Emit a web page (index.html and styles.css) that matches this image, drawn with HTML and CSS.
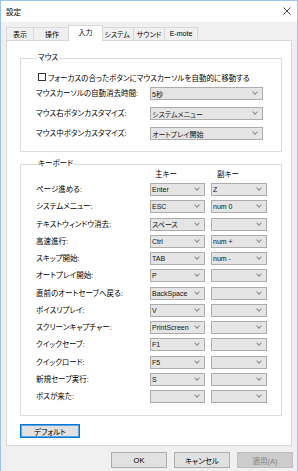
FILE: index.html
```html
<!DOCTYPE html>
<html lang="ja">
<head>
<meta charset="utf-8">
<title>設定</title>
<link rel="stylesheet" href="styles.css">
</head>
<body>
<div class="window">
  <div class="titlebar">
    <span class="title">設定</span>
    <svg class="close" width="8" height="8" viewBox="0 0 8 8"><path d="M0.5 0.5L7.5 7.5M7.5 0.5L0.5 7.5" stroke="#111" stroke-width="0.8" fill="none"/></svg>
  </div>
  <div class="client">
    <div class="tabs">
      <div class="tab t1">表示</div>
      <div class="tab t2">操作</div>
      <div class="tab t3 active">入力</div>
      <div class="tab t4">システム</div>
      <div class="tab t5">サウンド</div>
      <div class="tab t6">E-mote</div>
    </div>
    <div class="panel">
      <fieldset class="group mouse">
        <legend>マウス</legend>
        <label class="check"><span class="box"></span><span>フォーカスの合ったボタンにマウスカーソルを自動的に移動する</span></label>
        <div class="form">
          <span class="lbl">マウスカーソルの自動消去時間:</span>
          <div class="dd"><span class="val">5秒</span></div>
          <span class="lbl">マウス右ボタンカスタマイズ:</span>
          <div class="dd"><span class="val">システムメニュー</span></div>
          <span class="lbl">マウス中ボタンカスタマイズ:</span>
          <div class="dd"><span class="val">オートプレイ開始</span></div>
        </div>
      </fieldset>
      <fieldset class="group keyboard">
        <legend>キーボード</legend>
        <div class="keys-head">
          <span></span><span class="hdr">主キー</span><span class="hdr sub">副キー</span>
        </div>
        <div class="keys">
          <span class="lbl">ページ進める:</span>
          <div class="dd"><span class="val">Enter</span></div>
          <div class="dd"><span class="val">Z</span></div>

          <span class="lbl">システムメニュー:</span>
          <div class="dd"><span class="val">ESC</span></div>
          <div class="dd"><span class="val">num 0</span></div>

          <span class="lbl">テキストウィンドウ消去:</span>
          <div class="dd"><span class="val">スペース</span></div>
          <div class="dd"><span class="val"></span></div>

          <span class="lbl">高速進行:</span>
          <div class="dd"><span class="val">Ctrl</span></div>
          <div class="dd"><span class="val">num +</span></div>

          <span class="lbl">スキップ開始:</span>
          <div class="dd"><span class="val">TAB</span></div>
          <div class="dd"><span class="val">num -</span></div>

          <span class="lbl">オートプレイ開始:</span>
          <div class="dd"><span class="val">P</span></div>
          <div class="dd"><span class="val"></span></div>

          <span class="lbl">直前のオートセーブへ戻る:</span>
          <div class="dd"><span class="val">BackSpace</span></div>
          <div class="dd"><span class="val"></span></div>

          <span class="lbl">ボイスリプレイ:</span>
          <div class="dd"><span class="val">V</span></div>
          <div class="dd"><span class="val"></span></div>

          <span class="lbl">スクリーンキャプチャー:</span>
          <div class="dd"><span class="val">PrintScreen</span></div>
          <div class="dd"><span class="val"></span></div>

          <span class="lbl">クイックセーブ:</span>
          <div class="dd"><span class="val">F1</span></div>
          <div class="dd"><span class="val"></span></div>

          <span class="lbl">クイックロード:</span>
          <div class="dd"><span class="val">F5</span></div>
          <div class="dd"><span class="val"></span></div>

          <span class="lbl">新規セーブ実行:</span>
          <div class="dd"><span class="val">S</span></div>
          <div class="dd"><span class="val"></span></div>

          <span class="lbl">ボスが来た:</span>
          <div class="dd"><span class="val"></span></div>
          <div class="dd"><span class="val"></span></div>
        </div>
      </fieldset>
      <button class="btn default">デフォルト</button>
    </div>
    <div class="actions">
      <button class="btn">OK</button>
      <button class="btn">キャンセル</button>
      <button class="btn disabled">適用(A)</button>
    </div>
  </div>
</div>
</body>
</html>
```

FILE: styles.css
```css
* { box-sizing: border-box; }
html, body {
  margin: 0;
  padding: 0;
}
body {
  width: 298px;
  height: 471px;
  overflow: hidden;
  background: #f0f0f0;
  font-family: "Liberation Sans", "Noto Sans CJK JP", sans-serif;
  font-size: 7.5px;
  font-feature-settings: "palt";
  color: #000;
}
.window {
  width: 298px;
  height: 471px;
  border: 1px solid #9ec5eb;
  border-bottom: none;
  background: #f0f0f0;
}
.titlebar {
  height: 21px;
  background: #fff;
  display: flex;
  align-items: center;
  justify-content: space-between;
  padding: 0 6px 1px 5px;
}
.title { font-size: 7.5px; }
.close { display: block; margin-top: -1px; }
.client {
  padding: 0 4px 0 5px;
}
.tabs {
  display: flex;
  align-items: flex-end;
  height: 16px;
  margin-top: 3px;
  margin-bottom: -1px;
  position: relative;
  z-index: 1;
}
.tab {
  height: 13px;
  margin-bottom: 1px;
  margin-left: -1px;
  border: 1px solid #d9d9d9;
  border-bottom: none;
  background: #f0f0f0;
  display: flex;
  align-items: center;
  justify-content: center;
  padding-bottom: 1px;
  font-size: 7px;
}
.t1 { width: 28px; margin-left: 0; }
.t2 { width: 38px; }
.t3 { width: 35px; }
.t4 { width: 34px; }
.t5 { width: 32px; }
.t6 { width: 34px; }
.tab.active {
  height: 16px;
  margin-bottom: 0;
  margin-left: -3px;
  margin-right: -2px;
  background: #fff;
  position: relative;
  z-index: 2;
  padding-bottom: 3px;
}
.panel {
  margin-right: 1px;
  background: #fff;
  border: 1px solid #d9d9d9;
  padding: 12px 9px 7px 13px;
}
.group {
  margin: 0;
  padding: 0;
  min-width: 0;
  border: 1px solid #dcdcdc;
}
.group legend {
  padding: 0 1px;
  margin-left: 1px;
  line-height: 10px;
  height: 10px;
}
.mouse { padding: 9px 0 11px 15px; }
.check {
  display: flex;
  align-items: center;
  height: 10px;
  margin-left: 2px;
  gap: 2px;
}
.box {
  width: 8px;
  height: 8px;
  border: 1px solid #333;
  background: #fff;
  flex: none;
}
.form {
  margin-top: 5px;
  display: grid;
  grid-template-columns: 108px 113px;
  column-gap: 6px;
  grid-auto-rows: 13px;
  row-gap: 7px;
  align-items: center;
}
.lbl { white-space: nowrap; line-height: 13px; }
.dd {
  height: 13px;
  border: 1px solid #acacac;
  background: #e5e5e5;
  display: flex;
  align-items: center;
  padding-left: 1px;
  white-space: nowrap;
  overflow: hidden;
  font-size: 7px;
  color: #111;
}
.dd::after {
  content: "";
  margin-left: auto;
  margin-right: 5px;
  margin-top: -3px;
  width: 3px;
  height: 3px;
  border-right: 1px solid #8a8a8a;
  border-bottom: 1px solid #8a8a8a;
  transform: rotate(45deg);
  flex: none;
}
.keyboard { margin-top: 7px; padding: 1px 0 12px 15px; }
.keys-head {
  display: grid;
  grid-template-columns: 108px 55px 56px;
  column-gap: 6px;
  height: 10px;
  line-height: 10px;
  margin-bottom: 3px;
}
.hdr { padding-left: 5px; }
.hdr.sub { padding-left: 6px; }
.keys {
  display: grid;
  grid-template-columns: 108px 55px 56px;
  column-gap: 6px;
  grid-auto-rows: 13px;
  row-gap: 4.25px;
  align-items: center;
}
.btn {
  font: inherit;
  font-feature-settings: "palt";
  color: #000;
  margin: 0;
  padding: 0;
  background: #e1e1e1;
  border: 1px solid #adadad;
  display: block;
}
.default {
  margin-top: 8px;
  width: 60px;
  height: 14px;
  border-color: #0078d7;
  box-shadow: inset 0 0 0 1px #5fa4e0;
}
.actions {
  display: flex;
  justify-content: flex-end;
  gap: 7px;
  margin-top: 6px;
}
.actions .btn {
  width: 56px;
  height: 16px;
}
.btn.disabled {
  background: #cccccc;
  border-color: #bfbfbf;
  color: #838383;
}
```
